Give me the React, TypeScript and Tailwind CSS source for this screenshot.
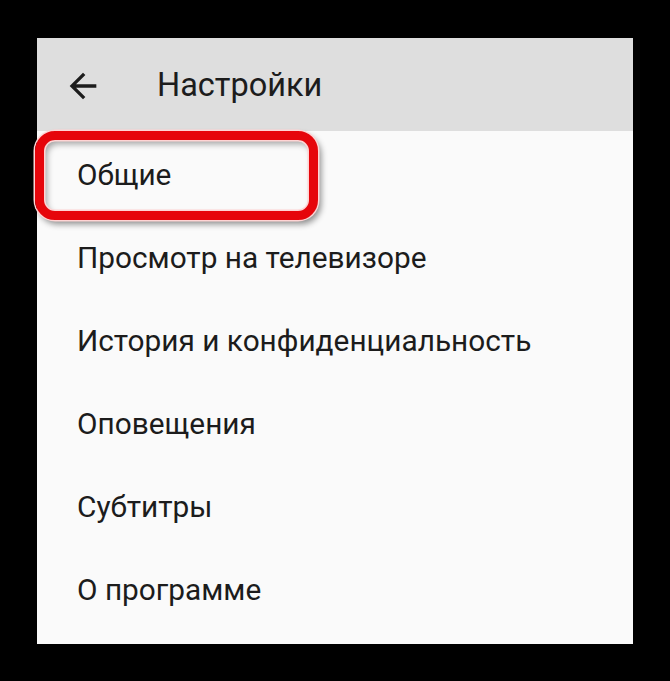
import React from "react";

const items = [
  "Общие",
  "Просмотр на телевизоре",
  "История и конфиденциальность",
  "Оповещения",
  "Субтитры",
  "О программе",
];

export default function App() {
  return (
    <div
      className="flex h-[681px] w-full items-center justify-center bg-black"
      style={{ fontFamily: "Roboto, 'Noto Sans', sans-serif" }}
    >
      <div className="relative flex h-[606px] w-[596px] flex-col bg-[#fafafa]">
        <div className="flex h-[93px] shrink-0 items-center bg-[#dedede] pt-[3px]">
          <svg
            viewBox="0 0 24 24"
            className="ml-[26px] h-[40px] w-[40px] text-[#1c1c1c]"
            fill="currentColor"
          >
            <path d="M20 11H7.83l5.59-5.59L12 4l-8 8 8 8 1.41-1.41L7.83 13H20v-2z" />
          </svg>
          <span className="ml-[54px] text-[32.5px] leading-none text-[#1c1c1c]">Настройки</span>
        </div>
        <div className="flex flex-col pt-[3px]">
          {items.map((t) => (
            <div
              key={t}
              className="flex h-[83px] items-center pl-[40px] text-[29.8px] text-[#1c1c1c]"
            >
              {t}
            </div>
          ))}
        </div>
        <div className="pointer-events-none absolute left-[-2px] top-[93px] h-[89px] w-[283px] rounded-[20px] border-[9px] border-[#e6050b] shadow-[0_0_0_1.5px_#ffd4d4,inset_0_0_0_1.5px_#ffd4d4,3px_4px_6px_rgba(0,0,0,0.45),inset_3px_4px_6px_rgba(0,0,0,0.35)]" />
      </div>
    </div>
  );
}
